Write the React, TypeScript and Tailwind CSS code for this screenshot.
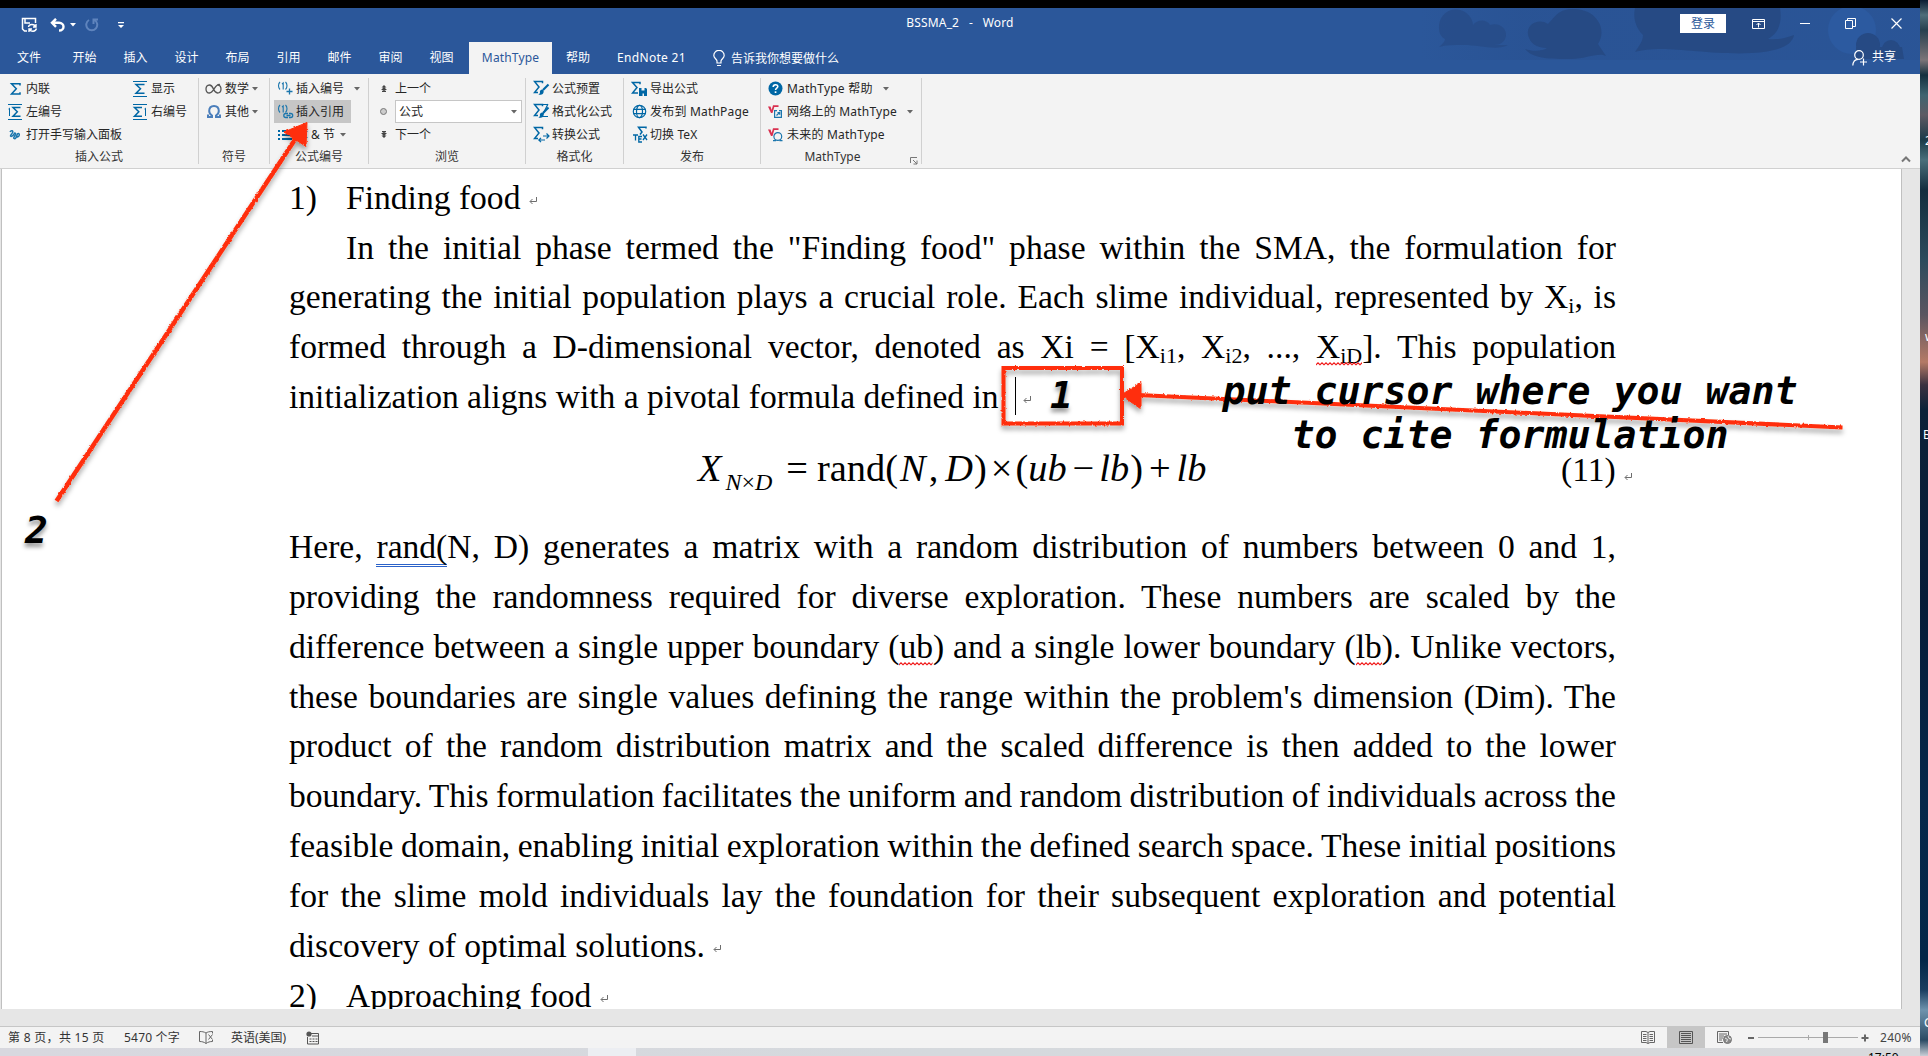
import React from "react";

const BLUE = "#0067a5";

/* ---------- small glyph icons ---------- */

function Caret({ className = "" }: { className?: string }) {
  return (
    <svg width="6" height="4" viewBox="0 0 6 4" className={"shrink-0 " + className}>
      <path d="M0 0h6L3 3.4z" fill="currentColor" />
    </svg>
  );
}

function ReturnMark({ className = "" }: { className?: string }) {
  return (
    <svg width="8" height="8" viewBox="0 0 8 8" className={"inline-block " + className}>
      <path d="M7.500 0v4.500H1.200M3.500 2L1 4.500 3.500 7" fill="none" stroke="#6d6d6d" strokeWidth="1" />
    </svg>
  );
}

type SigmaKind = "plain" | "display" | "left" | "right";
function Sigma({ kind }: { kind: SigmaKind }) {
  if (kind === "plain") {
    return (
      <svg width="16" height="16" viewBox="0 0 16 16">
        <path d="M13 4.500V2.700H4.500L9.300 7.700 4.500 13H13v-1.800" fill="none" stroke={BLUE} strokeWidth="1.500" />
      </svg>
    );
  }
  return (
    <svg width="16" height="16" viewBox="0 0 16 16">
      <path
        d={kind === "left" ? "M13.500 3.500H6l4.300 4.300L6 12.300h7.500" : kind === "right" ? "M10 3.500H2.500l4.300 4.300-4.300 4.500H10" : "M12.500 3.500H4l4.500 4.300L4 12.300h8.500"}
        fill="none"
        stroke={BLUE}
        strokeWidth="1.500"
      />
      <path d="M1 .5h14M1 15.500h14" stroke={BLUE} strokeWidth="1" />
      {kind === "left" && <path d="M1.500 5l1-.8V12" fill="none" stroke={BLUE} />}
      {kind === "right" && <path d="M12.500 5l1-.8V12" fill="none" stroke={BLUE} />}
    </svg>
  );
}

function Handwriting() {
  return (
    <svg width="16" height="16" viewBox="0 0 16 16" fill="none" stroke="#1b76ad" strokeWidth="1.500">
      <path d="M3 5c1-2 3.500-1.500 2.600 0.500C5 7 3.200 8 3.500 9c.4 1 2.500 0 3.500-2 .5-1.500 2-1 1.500.5-.6 1.500-2.500 3-1.500 4 1.500 1 2.500-1.500 3-3.500.4-1.800 2.500-2 2.300 0-.2 1.700-2.300 2.500-3.600 1.500" />
    </svg>
  );
}

function Infinity2() {
  return (
    <svg width="17" height="12" viewBox="0 0 17 12" fill="none" stroke="#555" strokeWidth="1.300">
      <path d="M15 1.500C10 0 9 10 4.500 10 2 10 1 8 1 6s1-4 3.500-4C9 2 8 10 12.500 10 15 10 16 8 16 6s-1-4-3.500-4" />
    </svg>
  );
}

function Omega() {
  return (
    <svg width="14" height="13" viewBox="0 0 14 13" fill="none" stroke="#4a7ebb" strokeWidth="2">
      <path d="M1 9.500V12h4v-1.500C2.500 9 2.200 7.500 2.200 6 2.200 3 4 1 7 1s4.800 2 4.800 5c0 1.500-.3 3-2.800 4.500V12h4V9.500" />
    </svg>
  );
}

function NumberIcon({ link }: { link?: boolean }) {
  return (
    <svg width="17" height="16" viewBox="0 0 17 16" fill="none" stroke="#1b76ad" strokeWidth="1.100">
      <path d="M3 1C1 3 1 6.500 3 8.500M5 3l1.200-1v6.500M8.500 1c2 2 2 5.500 0 7.500" />
      {link ? (
        <path d="M11 13.500H8.800a2 2 0 010-4H11M12 9.500h1.700a2 2 0 010 4H12M9.500 11.500h4" strokeWidth="1.300" />
      ) : (
        <path d="M12.500 7.500v6M9.500 10.500h6" strokeWidth="1.300" />
      )}
    </svg>
  );
}

function ListIcon() {
  return (
    <svg width="16" height="12" viewBox="0 0 16 12" fill={BLUE}>
      <path d="M1 1h2v2H1zM1 5h2v2H1zM1 9h2v2H1zM5 1h10v2H5zM5 5h10v2H5zM5 9h10v2H5z" />
    </svg>
  );
}

function Step({ down }: { down?: boolean }) {
  return (
    <svg width="6" height="7" viewBox="0 0 6 7" className={down ? "rotate-180" : ""} fill="#444">
      <path d="M3 0l2.500 2.500h-5zM3 2l3 3H0zM1 5.800h4V7H1zM2.300 4h1.400v3H2.300z" />
    </svg>
  );
}

function FormatIcon({ kind }: { kind: "brush" | "format" | "convert" }) {
  return (
    <svg width="17" height="17" viewBox="0 0 17 17" fill="none" stroke={BLUE} strokeWidth="1.500">
      <path d="M9.500 3.200V1.500H1.500L6 7l-4.500 5.500h3.500" />
      {kind === "format" && <path d="M9 1.500h6M9 13.500h6M15 1l-6 12" strokeWidth="1.200" />}
      {kind !== "convert" ? (
        <>
          <path d="M15.500 4.500L10 10" strokeWidth="2.200" />
          <path d="M9.500 9.500c-2 0-3 1.500-2.500 3 0 1-1 1.500-1.500 2 2.500 1 6-.5 5-4z" fill={BLUE} stroke="none" />
        </>
      ) : (
        <path d="M10 10h6M13.500 7.500L16 10l-2.500 2.500M12 14H6M8 11.800L5.800 14 8 16.200" strokeWidth="1.200" />
      )}
    </svg>
  );
}

function ExportIcon() {
  return (
    <svg width="17" height="16" viewBox="0 0 17 16" fill="none" stroke={BLUE} strokeWidth="1.500">
      <path d="M9 3.200V1.500H1.500L6 6.500 1.500 12H7" />
      <path d="M8 7h7l1 1v7H8z" fill={BLUE} stroke="none" />
      <path d="M10.500 7h3v2.500h-3zM11.500 12.500h1.500V15h-1.500z" fill="#f3f3f3" stroke="none" />
    </svg>
  );
}

function GlobeIcon() {
  return (
    <svg width="15" height="15" viewBox="0 0 15 15" fill="none" stroke={BLUE} strokeWidth="1.200">
      <circle cx="7.500" cy="7.500" r="6.200" />
      <ellipse cx="7.500" cy="7.500" rx="3" ry="6.200" />
      <path d="M1.300 5.300h12.400M1.300 9.700h12.400" />
    </svg>
  );
}

function TexIcon() {
  return (
    <svg width="16" height="17" viewBox="0 0 16 17" fill="none" stroke={BLUE} strokeWidth="1.300">
      <path d="M14 2.500V1.300H6.500L10 6 8 8.500" strokeWidth="1.500" />
      <path d="M1 9h5M3.500 9v5.500M10 10.500H6.800v5.500H10M6.800 13H9.500M11 8.500l4 5.500M15 8.500L11 14" />
    </svg>
  );
}

function HelpIcon() {
  return (
    <svg width="15" height="15" viewBox="0 0 15 15" fill="none">
      <circle cx="7.500" cy="7.500" r="7" fill={BLUE} />
      <path d="M5.200 6c0-3 4.600-3 4.600-.4 0 1.500-2.200 1.600-2.200 3.300" stroke="#fff" strokeWidth="1.600" />
      <path d="M6.700 10.300h1.700V12H6.700z" fill="#fff" />
    </svg>
  );
}

function WebMath({ future }: { future?: boolean }) {
  return (
    <svg width="15" height="14" viewBox="0 0 15 14" fill="none">
      <path d="M0 1.500h2.500L3.700 5 5 .3h5.500v1.800H6.300L4.500 8H3z" fill="#d9304f" />
      {future ? (
        <>
          <circle cx="9.800" cy="8.500" r="3.900" stroke="#1b76ad" strokeWidth="1.200" />
          <path d="M5 12.600h3M11.500 12.600h3" stroke="#1b76ad" strokeWidth="1.200" />
        </>
      ) : (
        <path d="M9 5.600H6.600v6.800h6.800V5.600H11M8.500 10.500l3-3M9.500 7.500h2.200v2.200" stroke="#1b76ad" strokeWidth="1.200" />
      )}
    </svg>
  );
}

/* ---------- ribbon ---------- */

function Row({ icon, label, slot, caret, active }: { icon: React.ReactNode; label: string; slot: string; caret?: string; active?: string }) {
  return (
    <div className={"flex h-[23px] items-center whitespace-pre " + (active ?? "")}>
      <span className={"flex shrink-0 items-center justify-center " + slot}>{icon}</span>
      <span>{label}</span>
      {caret && <Caret className={"text-[#666] " + caret} />}
    </div>
  );
}

function Group({ title, width, children, launcher }: { title: string; width: string; children: React.ReactNode; launcher?: boolean }) {
  return (
    <div className={"flex h-[86px] shrink-0 flex-col border-r border-[#d0d0d0] " + width}>
      <div className="-mt-px flex h-[69px] shrink-0">{children}</div>
      <div className={"relative flex h-[22px] shrink-0 items-center justify-center text-[#333] " + (launcher ? "pr-[17px]" : "")}>
        {title}
        {launcher && (
          <svg width="8" height="8" viewBox="0 0 8 8" className="absolute right-[3px] bottom-[3px]" fill="none" stroke="#777">
            <path d="M.5 6V.5H7M3 3l4 4M7 3.500V7H3.500" />
          </svg>
        )}
      </div>
    </div>
  );
}

function Ribbon() {
  return (
    <div className="flex h-[95px] shrink-0 border-b border-[#d0d0d0] bg-[#f3f3f3] pt-[4px] text-[12px] text-[#262626]">
      <Group title="插入公式" width="w-[199px]">
        <div className="w-[131px] pl-[7px]">
          <Row slot="w-[16px] mr-[3px]" icon={<Sigma kind="plain" />} label="内联" />
          <Row slot="w-[16px] mr-[3px]" icon={<Sigma kind="left" />} label="左编号" />
          <Row slot="w-[16px] mr-[3px]" icon={<Handwriting />} label="打开手写输入面板" />
        </div>
        <div className="pl-[1px]">
          <Row slot="w-[16px] mr-[3px]" icon={<Sigma kind="display" />} label="显示" />
          <Row slot="w-[16px] mr-[3px]" icon={<Sigma kind="right" />} label="右编号" />
        </div>
      </Group>
      <Group title="符号" width="w-[71px]">
        <div className="pl-[6px]">
          <Row slot="w-[17px] mr-[3px]" icon={<Infinity2 />} label="数学" caret="ml-[3px]" />
          <Row slot="w-[17px] mr-[3px]" icon={<Omega />} label="其他" caret="ml-[3px]" />
        </div>
      </Group>
      <Group title="公式编号" width="w-[99px]">
        <div className="pl-[4px]">
          <Row slot="w-[22px]" icon={<NumberIcon />} label="插入编号" caret="ml-[10px]" />
          <Row slot="w-[22px]" icon={<NumberIcon link />} label="插入引用" active="w-[77px] bg-[#c6c6c6]" />
          <Row slot="w-[22px]" icon={<ListIcon />} label="章 & 节" caret="ml-[5px]" />
        </div>
      </Group>
      <Group title="浏览" width="w-[157px]">
        <div className="pl-[7px]">
          <Row slot="w-[15px] mr-[4px]" icon={<Step />} label="上一个" />
          <div className="flex h-[23px] items-center">
            <span className="mr-[4px] flex w-[15px] justify-center">
              <span className="h-[7px] w-[7px] rounded-full border border-[#777] bg-[#ccc]" />
            </span>
            <span className="flex h-[23px] w-[127px] items-center justify-between border border-[#c6c6c6] bg-white pr-[4px] pl-[3px]">
              公式
              <Caret className="text-[#666]" />
            </span>
          </div>
          <Row slot="w-[15px] mr-[4px]" icon={<Step down />} label="下一个" />
        </div>
      </Group>
      <Group title="格式化" width="w-[98px]">
        <div className="pl-[7px]">
          <Row slot="w-[17px] mr-[2px]" icon={<FormatIcon kind="brush" />} label="公式预置" />
          <Row slot="w-[17px] mr-[2px]" icon={<FormatIcon kind="format" />} label="格式化公式" />
          <Row slot="w-[17px] mr-[2px]" icon={<FormatIcon kind="convert" />} label="转换公式" />
        </div>
      </Group>
      <Group title="发布" width="w-[137px]">
        <div className="pl-[7px]">
          <Row slot="w-[17px] mr-[2px]" icon={<ExportIcon />} label="导出公式" />
          <Row slot="w-[17px] mr-[2px]" icon={<GlobeIcon />} label="发布到 MathPage" active="tracking-[0.2px]" />
          <Row slot="w-[17px] mr-[2px]" icon={<TexIcon />} label="切换 TeX" active="tracking-[0.1px]" />
        </div>
      </Group>
      <Group title="MathType" width="w-[161px]" launcher>
        <div className="pl-[7px] tracking-[0.22px]">
          <Row slot="w-[15px] mr-[4px]" icon={<HelpIcon />} label="MathType 帮助" caret="ml-[10px]" />
          <Row slot="w-[15px] mr-[4px]" icon={<WebMath />} label="网络上的 MathType" caret="ml-[10px]" />
          <Row slot="w-[15px] mr-[4px]" icon={<WebMath future />} label="未来的 MathType" />
        </div>
      </Group>
      <div className="flex flex-1 items-end justify-end pr-[9px] pb-[5px]">
        <svg width="10" height="7" viewBox="0 0 10 7" fill="none" stroke="#777" strokeWidth="2">
          <path d="M1 5.500l4-4 4 4" />
        </svg>
      </div>
    </div>
  );
}

/* ---------- title bar ---------- */

function Clouds() {
  return (
    <svg width="500" height="52" viewBox="0 0 500 52" className="absolute top-0 right-0" fill="#264a84">
      <defs>
        <linearGradient id="sky" x1="0" x2="1">
          <stop offset="0" stopColor="#284f8e" stopOpacity="0" />
          <stop offset="0.200" stopColor="#284f8e" stopOpacity="0.450" />
          <stop offset="1" stopColor="#284f8e" stopOpacity="0.300" />
        </linearGradient>
      </defs>
      <rect width="500" height="52" fill="url(#sky)" />
      <path opacity="0.700" d="M19 20a17 17 0 0134-3c4-6 14-6 17 0 10-3 17 4 16 11-1 6-6 9-12 9h14c-10 6-30 0-44 0-10 0-18 0-25 2 3-3 6-5 6-8-4-2-6-6-6-11z" />
      <path d="M108 27c-2-12 12-17 20-11 8-8 10-15 26-15 22 0 34 20 24 35l8 12c-8-4-20 3-35 3-20 0-38 0-46-10 8 3 18 2 22-1-11 0-17-5-19-13z" />
      <path d="M215 0h145c2 12 0 25-12 31 10 1 18-1 26-4-2 12-20 17-42 18-30 2-70-4-90-4-12 0-20 1-27 3 4-6 8-11 8-17-8-8-10-18-8-27z" />
      <circle cx="432" cy="22" r="24" fill="#2c5aa0" />
      <circle cx="448" cy="37" r="12" />
      <circle cx="471" cy="41" r="9" />
      <path d="M436 39h46l2 12h-48z" />
    </svg>
  );
}

function TitleBar() {
  return (
    <div className="relative flex h-[34px] shrink-0 items-start bg-[#2b579a] text-[12px] text-white">
      <Clouds />
      <div className="relative flex h-[34px] w-[640px] items-center pl-[21px]">
        <svg width="17" height="16" viewBox="0 0 17 16" fill="none" stroke="#fff" strokeWidth="1.500">
          <path d="M6 14H3.500L1.500 12V1.500h13V6M4 1.500V6h5" />
          <path d="M7.500 10c.5-3 5.500-3.500 7-.5M15 7v3h-3M15.500 11.500c-1 3.500-5.500 3.500-7 .8M8 15v-3h3" strokeWidth="1.400" />
        </svg>
        <svg width="15" height="14" viewBox="0 0 15 14" fill="none" stroke="#fff" strokeWidth="2.400" className="ml-[12px]">
          <path d="M6 .8L2 4.800l4 4M2 4.800h7c6 0 6 7.700 0 7.700" />
        </svg>
        <Caret className="ml-[5px]" />
        <svg width="14" height="14" viewBox="0 0 14 14" fill="none" stroke="#5f84bd" strokeWidth="2" className="ml-[9px]">
          <path d="M4 2a5.500 5.500 0 105.500 0M8.500 6V1.500H13" />
        </svg>
        <svg width="6" height="7" viewBox="0 0 6 7" fill="#fff" className="ml-[19px]">
          <path d="M0 0h6v1.300H0zM0 3h6L3 6z" />
        </svg>
      </div>
      <div className="relative flex h-[29px] flex-1 items-center justify-center tracking-[0.15px] whitespace-pre">BSSMA_2   -   Word</div>
      <div className="relative flex h-[31px] w-[640px] items-center justify-end pr-[18px]">
        <span className="mr-[26px] flex h-[19px] w-[46px] items-center justify-center bg-white text-[#2b579a]">登录</span>
        <svg width="13" height="10" viewBox="0 0 13 10" fill="none" stroke="#fff" className="mr-[35px]">
          <path d="M.5.500h12v9H.5zM.5 2.500h12M6.500 8.500V4M4.500 6l2-2 2 2" />
        </svg>
        <span className="mr-[35px] h-px w-[10px] bg-white" />
        <svg width="11" height="11" viewBox="0 0 11 11" fill="none" stroke="#fff" className="mr-[35px]">
          <path d="M.5 2.500h7v8h-7zM2.500 2.500v-2h8v8h-3" />
        </svg>
        <svg width="11" height="11" viewBox="0 0 11 11" fill="none" stroke="#fff" strokeWidth="1.200">
          <path d="M.5.500l10 10M10.500.500l-10 10" />
        </svg>
      </div>
    </div>
  );
}

const TABS = ["开始", "插入", "设计", "布局", "引用", "邮件", "审阅", "视图"];

function TabBar() {
  return (
    <div className="flex h-[32px] shrink-0 items-stretch bg-[#2b579a] text-[12px] text-white">
      <div className="flex w-[59px] items-center pl-[17px]">文件</div>
      {TABS.map((t) => (
        <div key={t} className="flex w-[51px] items-center justify-center">
          {t}
        </div>
      ))}
      <div className="ml-[2px] flex w-[83px] items-center justify-center bg-[#f3f3f3] tracking-[0.15px] text-[#2b579a]">MathType</div>
      <div className="flex w-[52px] items-center justify-center">帮助</div>
      <div className="flex w-[95px] items-center justify-center tracking-[0.3px]">EndNote 21</div>
      <div className="ml-[14px] flex items-center pt-[1px]">
        <svg width="12" height="17" viewBox="0 0 12 17" fill="none" stroke="#fff" strokeWidth="1.200" className="mr-[6px]">
          <path d="M4 13v-2C3.500 9 .8 8 .8 5.500a5.200 5.200 0 0110.400 0C11.200 8 8.500 9 8 11v2zM4 15.500h4" />
        </svg>
        告诉我你想要做什么
      </div>
      <div className="relative ml-auto flex items-center pr-[24px] pb-[3px]">
        <svg width="15" height="16" viewBox="0 0 15 16" fill="none" stroke="#fff" strokeWidth="1.200" className="mt-[3px] mr-[5px]">
          <circle cx="7" cy="5" r="4.300" />
          <path d="M.8 15.500C1 12 3 9.500 6 9.300M8 12h7M11.500 8.500v7" />
        </svg>
        共享
      </div>
    </div>
  );
}

/* ---------- document ---------- */

function Line({ children, natural, className = "" }: { children: React.ReactNode; natural?: boolean; className?: string }) {
  return (
    <div className={"h-[49.85px] leading-[49.85px] whitespace-nowrap " + (natural ? "" : "[text-align-last:justify] ") + className}>
      {children}
    </div>
  );
}

function Sub({ children }: { children: React.ReactNode }) {
  return <span className="relative top-[5px] text-[22px] leading-none">{children}</span>;
}

function Squiggle({ children }: { children: React.ReactNode }) {
  return (
    <span className="relative inline-block leading-[38px]">
      {children}
      <svg className="absolute bottom-0 left-0 h-[4px] w-full" fill="none">
        <defs>
          <pattern id="wave" width="4" height="4" patternUnits="userSpaceOnUse">
            <path d="M-1 3.500L0 2.800 2 .8 4 2.800 5 3.500" fill="none" stroke="#f01818" strokeWidth="1.100" />
          </pattern>
        </defs>
        <rect width="100%" height="4" fill="url(#wave)" />
      </svg>
    </span>
  );
}

function Equation() {
  return (
    <div className="flex h-[100px] items-baseline text-[38.4px] leading-[92px]">
      <div className="flex w-[1272px] shrink-0 items-baseline pl-[409px] whitespace-pre">
        <i>X</i>
        <span className="relative top-[9px] ml-[4px] text-[24px] leading-none">
          <i>N</i>×<i>D</i>
        </span>
        <span className="ml-[14px]">=</span>
        <span className="ml-[9px]">rand(</span>
        <i className="ml-[2px]">N</i>
        <span className="ml-[3px]">,</span>
        <i className="ml-[7px]">D</i>
        <span className="ml-[1px]">)</span>
        <span className="ml-[4px]">×</span>
        <span className="ml-[3px]">(</span>
        <i>ub</i>
        <span className="ml-[6px]">−</span>
        <i className="ml-[5px]">lb</i>
        <span className="ml-[1px]">)</span>
        <span className="ml-[6px]">+</span>
        <i className="ml-[6px]">lb</i>
      </div>
      <div className="flex items-baseline text-[33.6px]">
        (11)
        <ReturnMark className="ml-[8px]" />
      </div>
    </div>
  );
}

function Page() {
  return (
    <div className="h-full overflow-hidden pt-[3.8px] pl-[287px] font-['Liberation_Serif',serif] text-[33.6px] text-black">
      <div className="w-[1327px]">
        <Line natural>
          <span className="inline-block w-[57px]">1)</span>Finding food <ReturnMark />
        </Line>
        <Line className="pl-[57px]">In the initial phase termed the "Finding food" phase within the SMA, the formulation for</Line>
        <Line>
          generating the initial population plays a crucial role. Each slime individual, represented by X<Sub>i</Sub>, is
        </Line>
        <Line>
          formed through a D-dimensional vector, denoted as Xi = [X<Sub>i1</Sub>, X<Sub>i2</Sub>, ...,{" "}
          <Squiggle>
            X<Sub>iD</Sub>
          </Squiggle>
          ]. This population
        </Line>
        <Line natural>
          initialization aligns with a pivotal formula defined in
          <span className="ml-[16px] inline-block h-[38px] w-px bg-black align-[-7px]" />
          <ReturnMark className="ml-[7px]" />
        </Line>
        <Equation />
        <Line>
          Here,{" "}
          <span className="inline-block border-b-[3px] border-double border-[#2b62c9] leading-[35px]">rand(</span>N, D) generates a matrix
          with a random distribution of numbers between 0 and 1,
        </Line>
        <Line>providing the randomness required for diverse exploration. These numbers are scaled by the</Line>
        <Line>
          difference between a single upper boundary (<Squiggle>ub</Squiggle>) and a single lower boundary (<Squiggle>lb</Squiggle>). Unlike
          vectors,
        </Line>
        <Line>these boundaries are single values defining the range within the problem's dimension (Dim). The</Line>
        <Line>product of the random distribution matrix and the scaled difference is then added to the lower</Line>
        <Line className="[word-spacing:-1.200px]">
          boundary. This formulation facilitates the uniform and random distribution of individuals across the
        </Line>
        <Line className="[word-spacing:-1.200px]">
          feasible domain, enabling initial exploration within the defined search space. These initial positions
        </Line>
        <Line>for the slime mold individuals lay the foundation for their subsequent exploration and potential</Line>
        <Line natural>
          discovery of optimal solutions. <ReturnMark />
        </Line>
        <Line natural>
          <span className="inline-block w-[57px]">2)</span>Approaching food <ReturnMark />
        </Line>
      </div>
    </div>
  );
}

/* ---------- status bar ---------- */

function StatusBar() {
  return (
    <div className="flex h-[22px] shrink-0 items-center border-t border-[#c6c6c6] bg-[#f3f3f3] pl-[8px] text-[12px] text-[#333]">
      <span className="w-[116px] tracking-[0.300px] whitespace-nowrap">第 8 页，共 15 页</span>
      <span className="w-[75px] tracking-[0.200px] whitespace-nowrap">5470 个字</span>
      <svg width="15" height="13" viewBox="0 0 15 13" fill="none" stroke="#666" className="mr-[17px]">
        <path d="M7 2C5 .8 3 .5.500.500v10c2.500 0 4.500.5 6.500 2zM7 2C8.500 1 10 .5 13.500.500v2M7 12.500c2-1.500 4-2 6.500-2V9M9.500 3.500l4 5M13.500 3.500l-4 5" />
      </svg>
      <span className="w-[75px] whitespace-nowrap">英语(美国)</span>
      <svg width="14" height="14" viewBox="0 0 14 14" fill="none" stroke="#555">
        <path d="M5 2.500h7.500v10.500h-11V6M6 5h6.500" />
        <path d="M3.500 8h8M3.500 10.500h8" strokeDasharray="2 1" />
        <circle cx="3" cy="3" r="2.600" fill="#555" stroke="none" />
      </svg>
      <div className="ml-auto flex h-full items-center">
        <svg width="14" height="13" viewBox="0 0 14 13" fill="none" stroke="#666" className="mr-[12px]">
          <path d="M7 1.500v11M.5.500H5l2 1 2-1h4.500v11H9l-2 1-2-1H.5zM2 3.500h3.500M2 5.500h3.500M2 7.500h3.500M2 9.500h3.500M8.500 3.500H12M8.500 5.500H12M8.500 7.500H12M8.500 9.500H12" />
        </svg>
        <span className="mr-[12px] flex h-full w-[38px] items-center justify-center bg-[#c6c6c6]">
          <svg width="14" height="13" viewBox="0 0 14 13" fill="none" stroke="#555">
            <path d="M.5.500h13v12H.5zM2 2.500h10M2 4.500h10M2 6.500h10M2 8.500h10M2 10.500h10" />
          </svg>
        </span>
        <svg width="15" height="13" viewBox="0 0 15 13" fill="none" stroke="#666" className="mr-[16px]">
          <path d="M6 11.500H.5V.500h11V4M2 3h8M2 5h5M2 7h4M2 9h3" />
          <circle cx="10.500" cy="8.500" r="4" fill="#888" stroke="#777" />
          <path d="M8 7l2.500 1.500L9.500 11M11 5l1 2.500 2 .5" stroke="#eee" />
        </svg>
        <span className="mr-[4px] h-[2px] w-[6px] bg-[#666]" />
        <span className="relative mr-[3px] h-[11px] w-[100px]">
          <span className="absolute top-[5px] left-0 h-px w-full bg-[#aaa]" />
          <span className="absolute top-[3px] left-[50px] h-[5px] w-px bg-[#aaa]" />
          <span className="absolute top-0 left-[65px] h-[11px] w-[5px] bg-[#777]" />
        </span>
        <svg width="8" height="8" viewBox="0 0 8 8" stroke="#666" strokeWidth="2">
          <path d="M.5 4h7M4 .5v7" />
        </svg>
        <span className="w-[51px] pl-[11px] tracking-[0.300px] text-[#444]">240%</span>
      </div>
    </div>
  );
}

function Taskbar() {
  return (
    <div className="relative h-[8px] shrink-0 overflow-hidden bg-linear-to-r from-[#d8d8df] via-[#d5d9dd] to-[#d8d9dc]">
      <span className="absolute top-0 left-[588px] h-full w-[48px] bg-[#eceef2]" />
      <span className="absolute top-[2px] left-[1868px] text-[12px] leading-[16px] text-black">17:50</span>
    </div>
  );
}

/* ---------- callouts drawn over the document ---------- */

function Callouts() {
  return (
    <>
      <svg width="1928" height="1056" viewBox="0 0 1928 1056" className="absolute inset-0" fill="none">
        <defs>
          <filter id="rough" x="-20" y="0" width="1960" height="1056" filterUnits="userSpaceOnUse">
            <feTurbulence type="fractalNoise" baseFrequency="0.350" numOctaves="2" seed="4" result="n" />
            <feDisplacementMap in="SourceGraphic" in2="n" scale="2.600" xChannelSelector="R" yChannelSelector="G" result="d" />
            <feDropShadow in="d" dx="0" dy="4" stdDeviation="2.500" floodColor="#000" floodOpacity="0.350" />
          </filter>
        </defs>
        <g filter="url(#rough)" stroke="#ff2f0a" strokeWidth="4">
          <rect x="1003.500" y="368" width="118.500" height="55.500" />
          <path d="M1138 395L1842.500 427.500" />
          <path d="M1121 395l20-12.500v26.500z" fill="#ff2f0a" strokeWidth="1" />
          <path d="M296 138L56.500 501" strokeWidth="4.500" />
          <path d="M307 122.500L284 132l22 14.500z" fill="#ff2f0a" strokeWidth="1" />
        </g>
      </svg>
      <div className="absolute top-[369px] left-[1210px] w-[600px] text-center font-['DejaVu_Sans_Mono',monospace] text-[38.200px] leading-[44.300px] font-bold whitespace-nowrap text-black italic">
        put cursor where you want
        <br />
        to cite formulation
      </div>
      <div className="absolute top-[373px] left-[1050px] font-['DejaVu_Sans_Mono',monospace] text-[38px] leading-[44px] font-bold text-black italic [text-shadow:0_4px_4px_rgba(0,0,0,0.4)]">
        1
      </div>
      <div className="absolute top-[508px] left-[25px] font-['DejaVu_Sans_Mono',monospace] text-[38px] leading-[44px] font-bold text-black italic [text-shadow:0_4px_4px_rgba(0,0,0,0.4)]">
        2
      </div>
    </>
  );
}

function DesktopEdge() {
  return (
    <div className="relative w-[8px] shrink-0 overflow-hidden bg-[linear-gradient(180deg,#0a1c33_0px,#4f6d7a_15px,#26404f_30px,#7a7478_60px,#14303f_75px,#3f6470_95px,#5d5a63_115px,#1a3a48_140px,#4a6f7b_160px,#132d3e_190px,#2c4b5c_260px,#5b5560_315px,#b47a66_362px,#3a3140_385px,#0c2138_410px,#061c38_600px,#06274a_800px,#032648_960px,#1a3e60_990px,#6f93ad_1010px,#2b4a63_1040px,#c9ced6_1056px)] text-[12px] text-white">
      <span className="absolute top-[132px] left-[5px]">2</span>
      <span className="absolute top-[328px] left-[5px]">w</span>
      <span className="absolute top-[426px] left-[3px]">B</span>
      <span className="absolute top-[1014px] left-[4px]">G</span>
    </div>
  );
}

export default function App() {
  return (
    <div className="relative flex h-[1056px] w-[1928px] overflow-hidden bg-black font-['Noto_Sans','Noto_Sans_CJK_SC',sans-serif]">
      <div className="flex w-[1920px] shrink-0 flex-col">
        <div className="h-[8px] shrink-0 bg-black" />
        <TitleBar />
        <TabBar />
        <Ribbon />
        <div className="flex h-[840px] shrink-0 bg-[#e6e6e6] pl-px">
          <div className="w-[1901px] border-x border-[#c0c0c0] bg-white">
            <Page />
          </div>
        </div>
        <div className="h-[17px] shrink-0 bg-[#e6e6e6]" />
        <StatusBar />
        <Taskbar />
      </div>
      <DesktopEdge />
      <Callouts />
    </div>
  );
}
